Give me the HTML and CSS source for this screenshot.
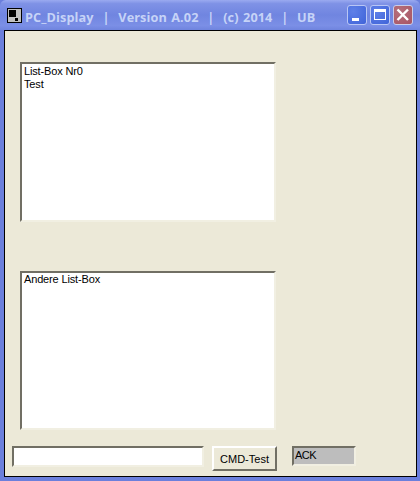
FILE: index.html
```html
<!DOCTYPE html>
<html lang="en">
<head>
  <meta charset="UTF-8">
  <title>PC_Display</title>
  <link rel="stylesheet" href="styles.css">
</head>
<body>
  <div class="window">
    <div class="titlebar">
      <div class="app-icon">
        <svg width="15" height="15" viewBox="0 0 15 15">
          <rect x="0.5" y="0.5" width="14" height="14" fill="#c0c0c0" stroke="#000"/>
          <rect x="2" y="2" width="7" height="7" fill="#000"/>
          <rect x="8" y="10" width="3" height="3" fill="#000"/>
        </svg>
      </div>
      <div class="title-text">PC_Display &nbsp;|&nbsp; Version A.02 &nbsp;|&nbsp; (c) 2014 &nbsp;|&nbsp; UB</div>
      <div class="title-buttons">
        <div class="title-btn">
          <svg width="20" height="20" viewBox="0 0 20 20"><rect x="5" y="13" width="7" height="3" fill="#fff"/></svg>
        </div>
        <div class="title-btn">
          <svg width="20" height="20" viewBox="0 0 20 20"><rect x="4.5" y="4.5" width="11" height="10" fill="none" stroke="#fff"/><rect x="4" y="4" width="12" height="3" fill="#fff"/></svg>
        </div>
        <div class="title-btn close">
          <svg width="20" height="20" viewBox="0 0 20 20"><path d="M4.5 4.5 L15 15 M15 4.5 L4.5 15" stroke="#fff" stroke-width="2.4" fill="none"/></svg>
        </div>
      </div>
    </div>
    <div class="client">
      <div class="listbox first">
        <div>List-Box Nr0</div>
        <div>Test</div>
      </div>
      <div class="listbox second">
        <div>Andere List-Box</div>
      </div>
      <div class="bottom-row">
        <div class="textbox"></div>
        <div class="cmd-button">CMD-Test</div>
        <div class="ack">ACK</div>
      </div>
    </div>
  </div>
</body>
</html>
```

FILE: styles.css
```css
html, body {
  margin: 0;
  padding: 0;
  overflow: hidden;
}
.window {
  width: 420px;
  height: 481px;
  box-sizing: border-box;
  padding: 0 3px 4px 4px;
  display: flex;
  flex-direction: column;
  background: #6b7fdc;
  font-family: "Liberation Sans", Arial, sans-serif;
  font-size: 11px;
  color: #000;
}
.titlebar {
  height: 30px;
  flex: none;
  margin: 0 -3px 0 -4px;
  padding: 0 7px 0 7px;
  display: flex;
  align-items: center;
  background: linear-gradient(180deg, #9aaaf0 0%, #7f92e6 12%, #7085e0 50%, #7b8fe6 85%, #6f84de 100%);
  border-radius: 6px 6px 0 0;
}
.app-icon {
  width: 15px;
  height: 15px;
  margin: 1px 3px 0 0;
}
.app-icon svg {
  display: block;
}
.title-text {
  flex: 1;
  padding-top: 3px;
  font-family: "Open Sans", Verdana, sans-serif;
  font-weight: bold;
  font-size: 12.7px;
  letter-spacing: 0.1px;
  word-spacing: 1px;
  color: #c6d3f7;
  white-space: nowrap;
}
.title-buttons {
  display: flex;
  gap: 3px;
}
.title-btn {
  width: 20px;
  height: 20px;
  box-sizing: border-box;
  border: 1px solid #b9c6f5;
  border-radius: 3px;
  background: radial-gradient(circle at 30% 30%, #5f80e8, #3f63d8);
  display: flex;
  align-items: center;
  justify-content: center;
}
.title-btn svg {
  flex: none;
}
.title-btn.close {
  background: radial-gradient(circle at 30% 30%, #b5707c, #a85463);
  border-color: #c9cde8;
}
.client {
  flex: 1;
  box-sizing: border-box;
  border: 1px solid #000;
  background: #ece9d8;
  padding: 31px 0 0 7px;
}
.listbox {
  box-sizing: border-box;
  width: 256px;
  height: 160px;
  margin-left: 8px;
  background: #fff;
  border: 2px solid;
  border-color: #716f64 #f1efe2 #f1efe2 #716f64;
  padding: 1px 2px;
  line-height: 13px;
  letter-spacing: -0.15px;
}
.listbox.second {
  height: 159px;
  margin-top: 49px;
  padding-top: 0;
}
.bottom-row {
  display: flex;
  align-items: flex-start;
  margin-top: 16px;
}
.textbox {
  box-sizing: border-box;
  width: 192px;
  height: 21px;
  background: #fff;
  border: 2px solid;
  border-color: #716f64 #f1efe2 #f1efe2 #716f64;
}
.cmd-button {
  box-sizing: border-box;
  width: 65px;
  height: 25px;
  margin-left: 8px;
  background: #ece9d8;
  border: 2px solid;
  border-color: #fff #716f64 #716f64 #fff;
  text-align: center;
  line-height: 22px;
}
.ack {
  box-sizing: border-box;
  width: 64px;
  height: 20px;
  margin-left: 15px;
  background: #bdbdbd;
  border: 2px solid;
  border-color: #716f64 #f1efe2 #f1efe2 #716f64;
  line-height: 14px;
  padding-left: 1px;
  letter-spacing: -0.5px;
}
```
